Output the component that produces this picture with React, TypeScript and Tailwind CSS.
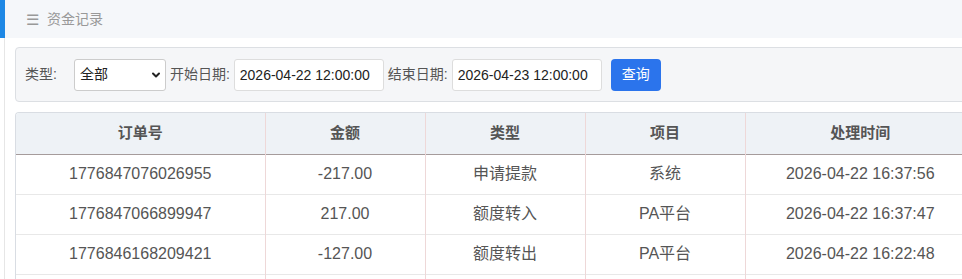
import { ChevronDown } from "lucide-react";

const rows = [
  { id: "1776847076026955", amount: "-217.00", type: "申请提款", item: "系统", time: "2026-04-22 16:37:56" },
  { id: "1776847066899947", amount: "217.00", type: "额度转入", item: "PA平台", time: "2026-04-22 16:37:47" },
  { id: "1776846168209421", amount: "-127.00", type: "额度转出", item: "PA平台", time: "2026-04-22 16:22:48" },
];

const font = { fontFamily: '"Liberation Sans", "Noto Sans CJK SC", sans-serif' };

export default function App() {
  return (
    <div className="w-[962px] h-[279px] overflow-hidden bg-white text-[#555]" style={font}>
      {/* Title bar */}
      <div className="flex h-[38px]">
        <div className="w-[5px] bg-[#1e88e5]" />
        <div className="flex-1 flex items-center gap-[8px] pl-[21px] bg-[#f5f7fa] text-[14px] text-[#999]">
          <span className="text-[15px] leading-none">☰</span>
          <span>资金记录</span>
        </div>
      </div>

      <div className="flex">
        <div className="w-[5px] shrink-0 border-r border-[#e6e6e6]" />
        <div className="flex-1 pl-[10px] pt-[9px]">
          {/* Filter bar */}
          <div className="w-[960px] h-[55px] flex items-center border border-[#dcdfe3] rounded-[4px] bg-[#f5f6f8] pl-[9px] text-[14px] text-[#555]">
            <span className="mr-[17px]">类型:</span>
            <div className="relative">
              <select className="appearance-none w-[92px] h-[32px] border border-[#ccc] rounded-[3px] bg-white pl-[5px] text-[14px] text-[#222] outline-none">
                <option>全部</option>
              </select>
              <ChevronDown className="absolute right-[4px] top-[10px] w-[12px] h-[12px] text-[#222] pointer-events-none" strokeWidth={4} />
            </div>
            <span className="ml-[4px] mr-[4px]">开始日期:</span>
            <input
              readOnly
              value="2026-04-22 12:00:00"
              className="w-[150px] h-[32px] border border-[#ddd] rounded-[3px] bg-white pl-[5px] text-[14px] text-[#222] outline-none"
            />
            <span className="ml-[4px] mr-[4px]">结束日期:</span>
            <input
              readOnly
              value="2026-04-23 12:00:00"
              className="w-[150px] h-[32px] border border-[#ddd] rounded-[3px] bg-white pl-[5px] text-[14px] text-[#222] outline-none"
            />
            <button className="ml-[9px] w-[50px] h-[32px] rounded-[4px] bg-[#2b74ec] text-white text-[14px]">查询</button>
          </div>

          {/* Table */}
          <div className="mt-[10px] w-[960px] border-t border-l border-[#d9dde3] rounded-tl-[4px] overflow-hidden">
            <table className="w-full border-collapse text-[16px] text-center">
              <thead>
                <tr className="h-[41px] bg-[#eef2f6] border-b border-[#a59b9b] font-bold text-[15px] text-[#555]">
                  <th className="w-[249px] border-r border-[#eed8d8]">订单号</th>
                  <th className="w-[160px] border-r border-[#eed8d8]">金额</th>
                  <th className="w-[160px] border-r border-[#eed8d8]">类型</th>
                  <th className="w-[160px] border-r border-[#eed8d8]">项目</th>
                  <th>处理时间</th>
                </tr>
              </thead>
              <tbody>
                {rows.map((r) => (
                  <tr key={r.id} className="h-[40px] border-b border-[#e8e8e8]">
                    <td className="border-r border-[#eed8d8]">{r.id}</td>
                    <td className="border-r border-[#eed8d8]">{r.amount}</td>
                    <td className="border-r border-[#eed8d8]">{r.type}</td>
                    <td className="border-r border-[#eed8d8]">{r.item}</td>
                    <td>{r.time}</td>
                  </tr>
                ))}
                <tr className="h-[40px]">
                  <td className="border-r border-[#eed8d8]" />
                  <td className="border-r border-[#eed8d8]" />
                  <td className="border-r border-[#eed8d8]" />
                  <td className="border-r border-[#eed8d8]" />
                  <td />
                </tr>
              </tbody>
            </table>
          </div>
        </div>
      </div>
    </div>
  );
}
